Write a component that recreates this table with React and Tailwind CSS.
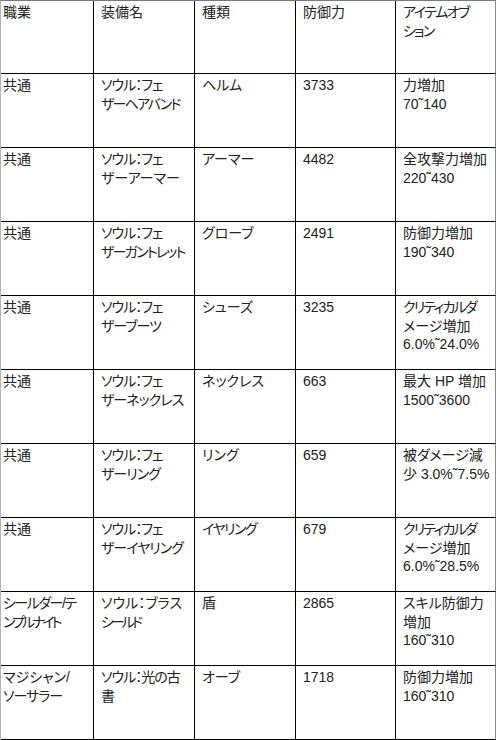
import React from "react";

const T1 = "tracking-[-1px]";
const T15 = "tracking-[-1.5px]";
const T2 = "tracking-[-1.8px]";
const T3 = "tracking-[-3px]";

const L = (text, cls = "") => ({ text, cls });

const rows = [
  [[L("職業")], [L("装備名")], [L("種類")], [L("防御力")], [L("アイテムオブ", T15), L("ション", T2)]],
  [[L("共通")], [L("ソウル：フェ", T1), L("ザーヘアバンド", T2)], [L("ヘルム")], [L("3733")], [L("力増加"), L("70˜140")]],
  [[L("共通")], [L("ソウル：フェ", T1), L("ザーアーマー")], [L("アーマー")], [L("4482")], [L("全攻撃力増加"), L("220˜430")]],
  [[L("共通")], [L("ソウル：フェ", T1), L("ザーガントレット", T2)], [L("グローブ")], [L("2491")], [L("防御力増加"), L("190˜340")]],
  [[L("共通")], [L("ソウル：フェ", T1), L("ザーブーツ", T1)], [L("シューズ")], [L("3235")], [L("クリティカルダ", T2), L("メージ増加"), L("6.0%˜24.0%")]],
  [[L("共通")], [L("ソウル：フェ", T1), L("ザーネックレス", T1)], [L("ネックレス")], [L("663")], [L("最大 HP 増加"), L("1500˜3600")]],
  [[L("共通")], [L("ソウル：フェ", T1), L("ザーリング", T1)], [L("リング")], [L("659")], [L("被ダメージ減"), L("少 3.0%˜7.5%")]],
  [[L("共通")], [L("ソウル：フェ", T1), L("ザーイヤリング", T1)], [L("イヤリング", T15)], [L("679")], [L("クリティカルダ", T2), L("メージ増加"), L("6.0%˜28.5%")]],
  [[L("シールダー/テ", T15), L("ンプルナイト", T3)], [L("ソウル：ブラス"), L("シールド", T3)], [L("盾")], [L("2865")], [L("スキル防御力"), L("増加"), L("160˜310")]],
  [[L("マジシャン/"), L("ソーサラー", T1)], [L("ソウル：光の古", T1), L("書")], [L("オーブ")], [L("1718")], [L("防御力増加"), L("160˜310")]],
];

export default function App() {
  return (
    <div className="w-[496px] h-[740px] overflow-hidden bg-white">
      <div className="grid grid-cols-[93px_101px_101px_100px_100px] border-t border-l border-t-[#7a7a7a] border-l-[#b4b4b4] font-['Liberation_Sans','Noto_Sans_CJK_JP',sans-serif] [font-feature-settings:'palt'] text-[14px] leading-[18.5px] text-[#222]">
        {rows.map((row, ri) =>
          row.map((cell, ci) => (
            <div
              key={ri + "-" + ci}
              className={
                (ri === 0 ? "h-[73px] " : "h-[74px] ") +
                (ci === 0 ? "pl-[2px] " : "pl-[7px] ") +
                (ci === 4 ? "border-r-[#8a8a8a] " : "border-r-black ") +
                "border-r border-b border-b-black pt-[2px] whitespace-nowrap overflow-visible"
              }
            >
              {cell.map((line, li) => (
                <div key={li} className={line.cls}>
                  {line.text}
                </div>
              ))}
            </div>
          ))
        )}
      </div>
    </div>
  );
}
